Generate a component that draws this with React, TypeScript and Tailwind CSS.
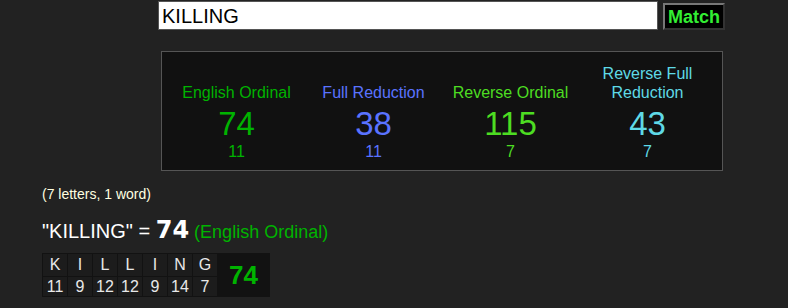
const ciphers = [
  { name: "English Ordinal", value: "74", sub: "11", color: "text-[#00b300]" },
  { name: "Full Reduction", value: "38", sub: "11", color: "text-[#5a73ff]" },
  { name: "Reverse Ordinal", value: "115", sub: "7", color: "text-[#4ddd22]" },
  { name: "Reverse Full Reduction", value: "43", sub: "7", color: "text-[#5fd9e6]" },
]

const letters = [
  ["K", "11"],
  ["I", "9"],
  ["L", "12"],
  ["L", "12"],
  ["I", "9"],
  ["N", "14"],
  ["G", "7"],
]

export default function App() {
  return (
    <div className="w-[788px] h-[308px] overflow-hidden bg-[#222] font-['Liberation_Sans',Arial,sans-serif]">
      {/* search row */}
      <div className="flex items-start gap-[5px] pl-[158px] pt-px">
        <input
          readOnly
          value="KILLING"
          className="w-[500px] h-[29px] border border-[#555] bg-white pl-[3px] text-[20px] text-black outline-none"
        />
        <button className="mt-[2px] w-[62px] h-[27px] border-2 border-t-[#777] border-l-[#777] border-r-[#333] border-b-[#333] bg-black text-[18px] font-bold leading-none text-[#33ee33]">
          Match
        </button>
      </div>

      {/* cipher panel */}
      <div className="ml-[161px] mt-[21px] w-[562px] h-[120px] border border-[#555] bg-[#111] grid grid-cols-4 items-end px-[6px] pb-[9px]">
        {ciphers.map((c) => (
          <div key={c.name} className={`flex flex-col items-center text-center ${c.color}`}>
            <div className="text-[16px] leading-[19px] px-2">{c.name}</div>
            <div className="mt-[4px] text-[33px] leading-[36px]">{c.value}</div>
            <div className="text-[16px] leading-[19px]">{c.sub}</div>
          </div>
        ))}
      </div>

      <div className="ml-[42px] mt-[15px] text-[14px] leading-[16px] text-[#ffffe0]">(7 letters, 1 word)</div>

      <div className="ml-[42px] mt-[16px] leading-[24px] text-white">
        <span className="text-[20px]">"KILLING" = </span>
        <span className="font-['DejaVu_Sans',Verdana,sans-serif] text-[24px] font-bold">74</span>
        <span className="text-[18px] text-[#00b300]"> (English Ordinal)</span>
      </div>

      {/* letter breakdown */}
      <table className="ml-[42px] mt-[8px] border-separate border-spacing-px bg-[#121212] text-[16px] text-[#e8e8e8]">
        <tbody>
          <tr>
            {letters.map(([l], i) => (
              <td key={i} className="w-[24px] h-[22px] bg-[#1c1c1c] p-0 text-center leading-[22px]">
                {l}
              </td>
            ))}
            <td rowSpan={2} className="w-[51px] p-0 text-center text-[26px] font-bold text-[#00b300]">
              74
            </td>
          </tr>
          <tr>
            {letters.map(([, n], i) => (
              <td key={i} className="w-[24px] h-[19px] bg-[#1c1c1c] p-0 text-center leading-[19px]">
                {n}
              </td>
            ))}
          </tr>
        </tbody>
      </table>
    </div>
  )
}
